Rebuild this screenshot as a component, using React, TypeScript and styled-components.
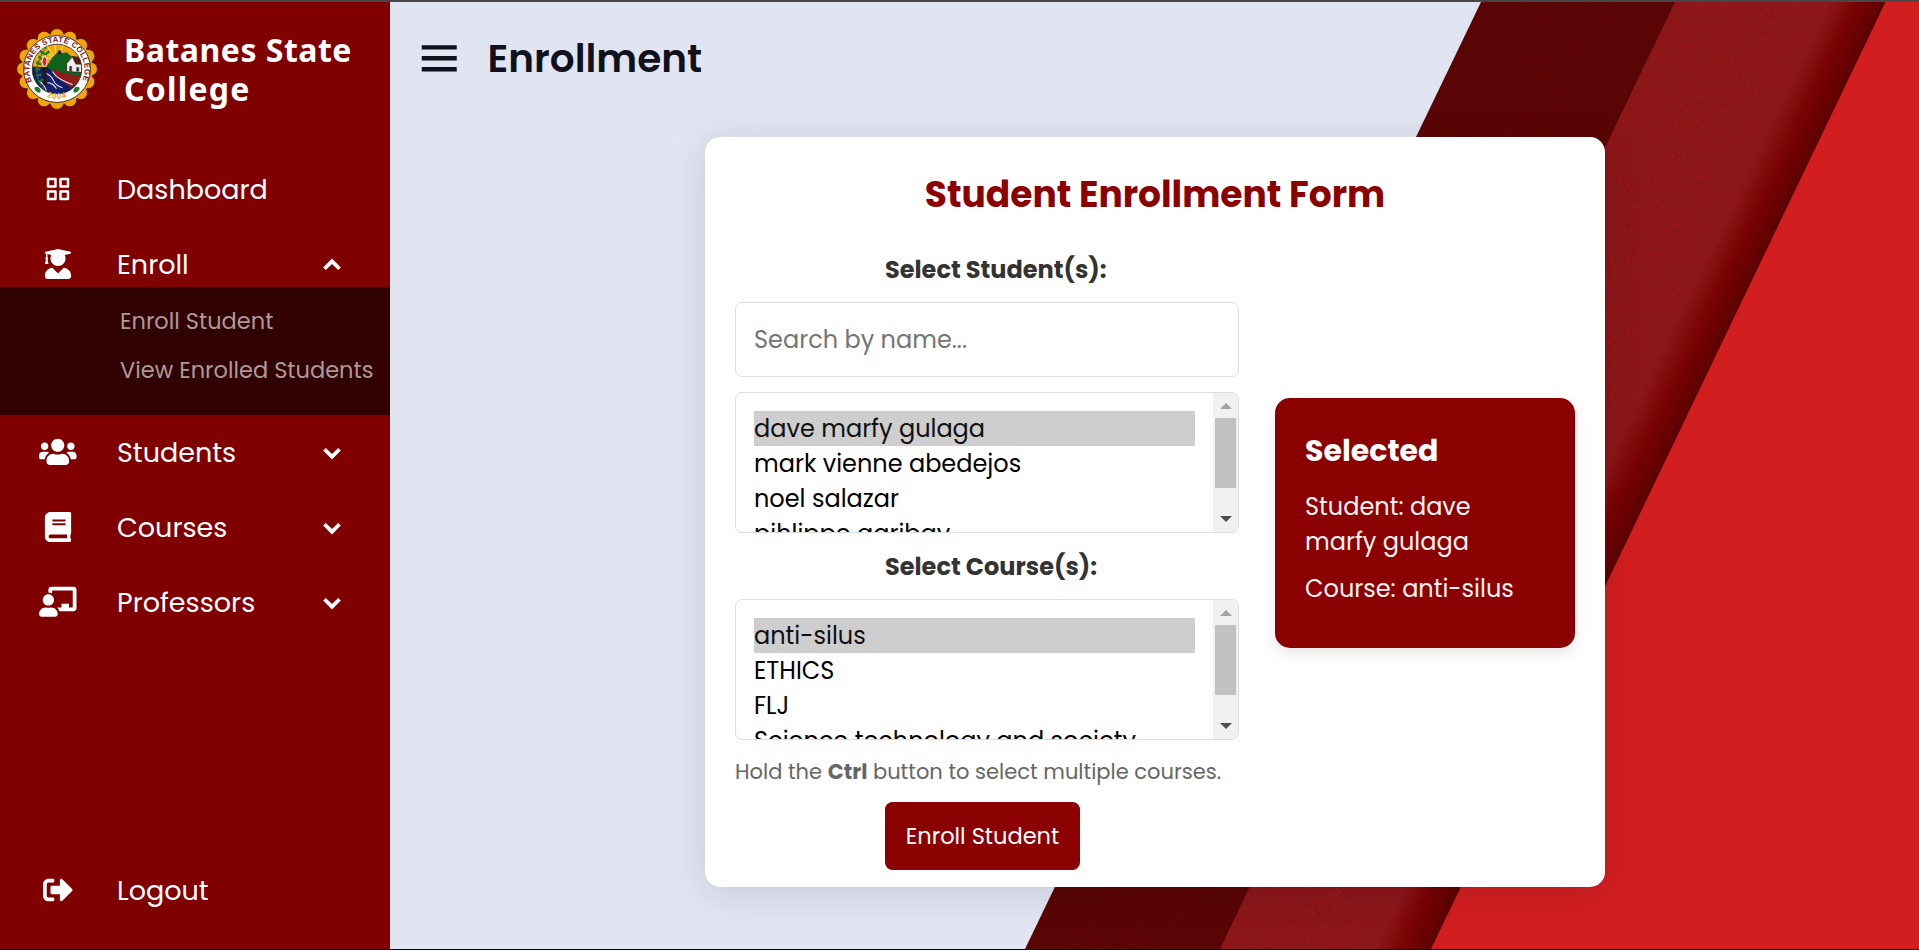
import React from 'react';
import styled, { createGlobalStyle } from 'styled-components';
import { BiGridAlt, BiMenu, BiSolidChevronDown, BiSolidChevronUp } from 'react-icons/bi';
import { FaBook, FaChalkboardTeacher, FaSignOutAlt, FaUserGraduate, FaUsers } from 'react-icons/fa';

const GlobalStyle = createGlobalStyle`
  *, *::before, *::after { box-sizing: border-box; }
  body {
    margin: 0;
    overflow: hidden;
    font-family: Poppins, Inter, sans-serif;
  }
  h1, h2, h3, p, ul { margin: 0; padding: 0; }
`;

const Shell = styled.div`
  display: flex;
  width: 100%;
  height: 950px;
  border-top: 2px solid #484646;
  border-bottom: 1px solid #000;
  background: #e1e5f1;
`;

/* ---------- sidebar ---------- */

const Sidebar = styled.nav`
  flex: none;
  display: flex;
  flex-direction: column;
  width: 390px;
  background: #800000;
  color: #fff;
`;

const Brand = styled.div`
  display: flex;
  align-items: center;
  height: 134px;
  margin-bottom: 16px;
  padding-left: 16px;
  gap: 26px;
`;

const BrandName = styled.h1`
  width: 260px;
  font: 700 32px/39px 'Noto Sans', sans-serif;
`;

const BrandLine = styled.span<{ $track: number }>`
  display: block;
  letter-spacing: ${(p) => p.$track}px;
`;

const MenuItem = styled.div<{ $short?: boolean }>`
  flex: none;
  display: flex;
  align-items: center;
  height: 75px;
  margin-bottom: ${(p) => (p.$short ? '-15px' : '0')};
`;

const MenuIcon = styled.span<{ $wide?: boolean }>`
  display: flex;
  justify-content: center;
  width: 116px;
  margin: -1px 1px 0 0;
  font-size: ${(p) => (p.$wide ? '37.5px' : '30px')};
`;

const MenuLabel = styled.span`
  width: 195px;
  font-size: 27px;
`;

const Chevron = styled.span`
  display: flex;
  justify-content: center;
  width: 40px;
  font-size: 30px;
`;

const SubMenu = styled.div`
  flex: none;
  position: relative;
  height: 128px;
  padding: 10px 0 0 120px;
  background: #310000;
`;

const SubItem = styled.div`
  font-size: 22.5px;
  line-height: 49px;
  white-space: nowrap;
  color: #ad9999;
`;

const SidebarFoot = styled.div`
  margin-top: auto;
  padding-bottom: 21px;
`;

/* ---------- main area ---------- */

const Main = styled.main`
  position: relative;
  flex: 1;
  display: flex;
  flex-direction: column;
  align-items: center;
  overflow: hidden;
`;

const Backdrop = styled.svg`
  position: absolute;
  inset: 0;
`;

const Header = styled.header`
  position: relative;
  align-self: stretch;
  display: flex;
  align-items: center;
  gap: 22px;
  height: 112px;
  margin-bottom: 23px;
  padding-left: 23px;
  color: #11101d;
  svg { font-size: 52.5px; }
`;

const PageTitle = styled.h2`
  padding-top: 1px;
  font-size: 39px;
  font-weight: 600;
`;

const Card = styled.section`
  position: relative;
  width: 900px;
  height: 750px;
  margin-left: 1px;
  padding: 31px 30px 29px;
  border-radius: 15px;
  background: #fff;
  box-shadow: 0 6px 38px rgba(0, 0, 50, 0.12);
`;

const CardTitle = styled.h2`
  margin-bottom: 30px;
  font-size: 36px;
  line-height: 54px;
  font-weight: 700;
  text-align: center;
  color: #8b0000;
`;

const Columns = styled.div`
  display: flex;
  gap: 36px;
`;

const Form = styled.div`
  display: flex;
  flex-direction: column;
  width: 504px;
`;

const FieldLabel = styled.label`
  margin: 0 0 14px 150px;
  font-size: 24px;
  line-height: 36px;
  font-weight: 700;
  color: #333;
`;

const SearchInput = styled.input`
  height: 75px;
  margin-bottom: 15px;
  padding: 0 18px;
  border: 1px solid #ddd;
  border-radius: 7px;
  font: 400 24px Poppins, Inter, sans-serif;
  outline: none;
  &::placeholder { color: #757575; }
`;

const ListBox = styled.div`
  display: flex;
  height: 141px;
  margin-bottom: 16px;
  border: 1px solid #ddd;
  border-radius: 7px;
  overflow: hidden;
`;

const Options = styled.ul`
  flex: 1;
  padding: 18px 18px 0;
  list-style: none;
  overflow: hidden;
`;

const Option = styled.li<{ $selected?: boolean }>`
  height: 35px;
  font-size: 24px;
  line-height: 36px;
  white-space: nowrap;
  color: ${(p) => (p.$selected ? '#101010' : '#000')};
  background: ${(p) => (p.$selected ? '#cecece' : 'transparent')};
`;

const ScrollTrack = styled.div`
  display: flex;
  flex-direction: column;
  align-items: center;
  width: 25px;
  background: #f1f1f1;
`;

const ScrollThumb = styled.div`
  width: 21px;
  height: 70px;
  background: #c1c1c1;
`;

const ArrowCell = styled.div<{ $grow?: boolean }>`
  display: flex;
  align-items: ${(p) => (p.$grow ? 'flex-end' : 'flex-start')};
  flex: ${(p) => (p.$grow ? '1' : 'none')};
  height: 25px;
  padding: 10px 0;
`;

const Hint = styled.p`
  margin: -1px 0 14px;
  font-size: 21px;
  line-height: 33px;
  white-space: nowrap;
  color: #666;
`;

const SubmitButton = styled.button`
  width: 195px;
  height: 68px;
  margin-left: 150px;
  padding: 0;
  border: 0;
  border-radius: 7.5px;
  background: #8b0000;
  color: #fff;
  font: 400 22.5px Poppins, Inter, sans-serif;
`;

const Summary = styled.aside`
  width: 300px;
  height: 250px;
  margin-top: 146px;
  padding: 30px;
  border-radius: 15px;
  background: #8b0000;
  color: #fff;
  box-shadow: 0 6px 15px rgba(0, 0, 0, 0.1);
`;

const SummaryTitle = styled.h3`
  margin-bottom: 16px;
  font-size: 30px;
  line-height: 45px;
  font-weight: 700;
`;

const SummaryLine = styled.p`
  margin-bottom: 12px;
  font-size: 24px;
  line-height: 35px;
  color: #fdf3f3;
`;

/* ---------- seal ---------- */

const petals = Array.from({ length: 16 }, (_, i) => {
  const a = (i * Math.PI * 2) / 16 - Math.PI / 2;
  return [40.5 + Math.cos(a) * 33.2, 40.5 + Math.sin(a) * 33.2];
});

function Seal() {
  return (
    <svg width="82" height="82" viewBox="0 0 81 81">
      <defs>
        <clipPath id="seal-inner"><circle cx="40.5" cy="40.5" r="24.5" /></clipPath>
        <path id="seal-arc" d="M16 53 A27.2 27.2 0 1 1 65 53" />
        <path id="seal-base" d="M20 61 Q40.5 79 61 61" />
      </defs>
      {petals.map(([x, y], i) => (
        <circle key={i} cx={x} cy={y} r="6.7" fill="#f5a20b" stroke="#3a1a05" strokeWidth="0.8" />
      ))}
      <circle cx="40.5" cy="40.5" r="35" fill="#f5a20b" />
      <circle cx="40.5" cy="40.5" r="33" fill="#fff" stroke="#2a2a2a" strokeWidth="0.9" />
      <g clipPath="url(#seal-inner)">
        <rect width="81" height="81" fill="#f3a70f" />
        <path d="M40 31 L22 20 M40 31 L29 16 M40 31 L38 14 M40 31 L18 28 M40 31 L47 16" stroke="#f9dc42" strokeWidth="1.3" />
        <path d="M30 38 L36 29 L42 23 L46 25 L50 24 L57 30 L66 33 L66 50 L34 49Z" fill="#11621c" />
        <path d="M41 26 l1 -4 h2 l1 4z" fill="#222" />
        <path d="M14 38 L32 39 L39 46 L52 55 L60 54 L66 66 H14Z" fill="#12206b" />
        <path d="M37 40 L47 45 L62 47 L62 54 L54 59 L48 54 L38 48Z" fill="#8d1d1a" />
        <path d="M30 45 q5 2 7 7 t9 7 M36 43 q3 5 9 8 t11 5 M31 54 q5 0 9 6 M22 52 q6 3 8 10" fill="none" stroke="#dfe6fb" strokeWidth="1.1" />
        <path d="M50 35 L56 28 L65 32 L65 44 L50 43Z" fill="#eee" stroke="#222" strokeWidth="0.8" />
        <path d="M55 28 L63 28.500 L66 36 L59 36Z" fill="#5a1b14" />
        <path d="M53 43 v-5 h2 v5 M60 43 v-4 h2 v4" fill="#333" stroke="#333" strokeWidth="0.6" />
        <path d="M27 60 Q13 42 30 19" fill="none" stroke="#1c7a2a" strokeWidth="1.4" strokeDasharray="2.5 1" />
        <path d="M22 28 l4 3 M24 23 l5 3 M20 34 l5 2 M19 40 l5 1 M20 47 l5 -1 M22 53 l5 -2 M29 26 l4 -3" stroke="#1c7a2a" strokeWidth="2.3" />
      </g>
      <circle cx="40.5" cy="40.5" r="24.5" fill="none" stroke="#2a2a2a" strokeWidth="0.8" />
      <path d="M25.2 39 h6.4 l-1.6 3.2 v14 h-3 v-14z" fill="#26160f" />
      <path d="M28.3 27.5 q3.4 3.2 2.2 6.5 q-1 4 -2 4 q-2.6 -1 -3 -4 q-.2 -3 2.800 -6.500" fill="#e32222" stroke="#fff" strokeWidth="0.9" />
      <path d="M18 59 q4 -2.500 6 1.500 q1 3 -1.500 3.500 q-4 -1 -4.500 -5z" fill="#1b7f2c" />
      <path d="M63 59 q-4 -2.500 -6 1.500 q-1 3 1.500 3.500 q4 -1 4.500 -5z" fill="#1b7f2c" />
      <text fontFamily="Liberation Sans, sans-serif" fontSize="7.8" fontWeight="700" fill="#7d1216">
        <textPath href="#seal-arc" textLength="108" lengthAdjust="spacing">BATANES STATE COLLEGE</textPath>
      </text>
      <text fontFamily="Liberation Sans, sans-serif" fontSize="7.8" fontWeight="700" fill="#e09a12">
        <textPath href="#seal-base" startOffset="50%" textAnchor="middle" letterSpacing="0.9">2004</textPath>
      </text>
    </svg>
  );
}

/* ---------- diagonal backdrop ---------- */

const EDGE_SLOPE = 0.4802;

/* Builds a path of single-pixel specks scattered inside a slanted band. */
function specks(count: number, topX: number, width: number, seed: number) {
  let s = seed;
  const next = () => {
    s = (s * 1664525 + 1013904223) % 4294967296;
    return s / 4294967296;
  };
  let d = '';
  for (let i = 0; i < count; i += 1) {
    const y = Math.floor(next() * 947);
    const x = Math.round(topX - y * EDGE_SLOPE + ((next() + next()) / 2) * width);
    d += `M${x} ${y}h1v1h-1z`;
  }
  return d;
}

const darkSpecks = specks(5200, 1096, 170, 7);
const brightSpecks = specks(2600, 1287, 165, 41);

function DiagonalBands() {
  return (
    <Backdrop width="1529" height="947" viewBox="0 0 1529 947">
      <defs>
        <linearGradient id="fold" gradientUnits="userSpaceOnUse" x1="1495" y1="0" x2="1450" y2="-21.600">
          <stop offset="0" stopColor="#5a0303" />
          <stop offset="0.25" stopColor="#6c0101" />
          <stop offset="0.55" stopColor="#7a0303" />
          <stop offset="0.8" stopColor="#850e0f" />
          <stop offset="1" stopColor="#8c1618" />
        </linearGradient>
      </defs>
      <path d="M1091 0H1290L835 947H635Z" fill="#5a0505" />
      <path d={darkSpecks} fill="#6a0204" />
      <path d="M1285 0H1500L1046 947H830Z" fill="url(#fold)" />
      <path d={brightSpecks} fill="#b01a1c" />
      <path d="M1495.500 0H1529V947H1041Z" fill="#d21e1e" />
    </Backdrop>
  );
}

/* ---------- list box ---------- */

function ScrollList({ entries }: { entries: string[] }) {
  return (
    <ListBox role="listbox">
      <Options>
        {entries.map((text, i) => (
          <Option key={text} $selected={i === 0}>{text}</Option>
        ))}
      </Options>
      <ScrollTrack>
        <ArrowCell>
          <svg width="12" height="6" viewBox="0 0 12 6"><path d="M0 6L6 0L12 6Z" fill="#a3a3a3" /></svg>
        </ArrowCell>
        <ScrollThumb />
        <ArrowCell $grow>
          <svg width="12" height="6" viewBox="0 0 12 6"><path d="M0 0L6 6L12 0Z" fill="#505050" /></svg>
        </ArrowCell>
      </ScrollTrack>
    </ListBox>
  );
}

const students = ['dave marfy gulaga', 'mark vienne abedejos', 'noel salazar', 'pihlippe garibay'];
const courses = ['anti-silus', 'ETHICS', 'FLJ', 'Science technology and society'];

const sections = [
  { label: 'Students', icon: <FaUsers />, wide: true },
  { label: 'Courses', icon: <FaBook />, wide: false },
  { label: 'Professors', icon: <FaChalkboardTeacher />, wide: true },
];

export default function App() {
  return (
    <>
      <GlobalStyle />
      <Shell>
        <Sidebar>
          <Brand>
            <Seal />
            <BrandName>
              <BrandLine $track={0.5}>Batanes State</BrandLine>
              <BrandLine $track={1.2}>College</BrandLine>
            </BrandName>
          </Brand>
          <MenuItem>
            <MenuIcon><BiGridAlt /></MenuIcon>
            <MenuLabel>Dashboard</MenuLabel>
          </MenuItem>
          <MenuItem $short>
            <MenuIcon><FaUserGraduate /></MenuIcon>
            <MenuLabel>Enroll</MenuLabel>
            <Chevron><BiSolidChevronUp /></Chevron>
          </MenuItem>
          <SubMenu>
            <SubItem>Enroll Student</SubItem>
            <SubItem>View Enrolled Students</SubItem>
          </SubMenu>
          {sections.map((s) => (
            <MenuItem key={s.label}>
              <MenuIcon $wide={s.wide}>{s.icon}</MenuIcon>
              <MenuLabel>{s.label}</MenuLabel>
              <Chevron><BiSolidChevronDown /></Chevron>
            </MenuItem>
          ))}
          <SidebarFoot>
            <MenuItem>
              <MenuIcon><FaSignOutAlt /></MenuIcon>
              <MenuLabel>Logout</MenuLabel>
            </MenuItem>
          </SidebarFoot>
        </Sidebar>
        <Main>
          <DiagonalBands />
          <Header>
            <BiMenu />
            <PageTitle>Enrollment</PageTitle>
          </Header>
          <Card>
            <CardTitle>Student Enrollment Form</CardTitle>
            <Columns>
              <Form>
                <FieldLabel>Select Student(s):</FieldLabel>
                <SearchInput placeholder="Search by name..." />
                <ScrollList entries={students} />
                <FieldLabel>Select Course(s):</FieldLabel>
                <ScrollList entries={courses} />
                <Hint>Hold the <b>Ctrl</b> button to select multiple courses.</Hint>
                <SubmitButton>Enroll Student</SubmitButton>
              </Form>
              <Summary>
                <SummaryTitle>Selected</SummaryTitle>
                <SummaryLine>Student: dave marfy gulaga</SummaryLine>
                <SummaryLine>Course: anti-silus</SummaryLine>
              </Summary>
            </Columns>
          </Card>
        </Main>
      </Shell>
    </>
  );
}
